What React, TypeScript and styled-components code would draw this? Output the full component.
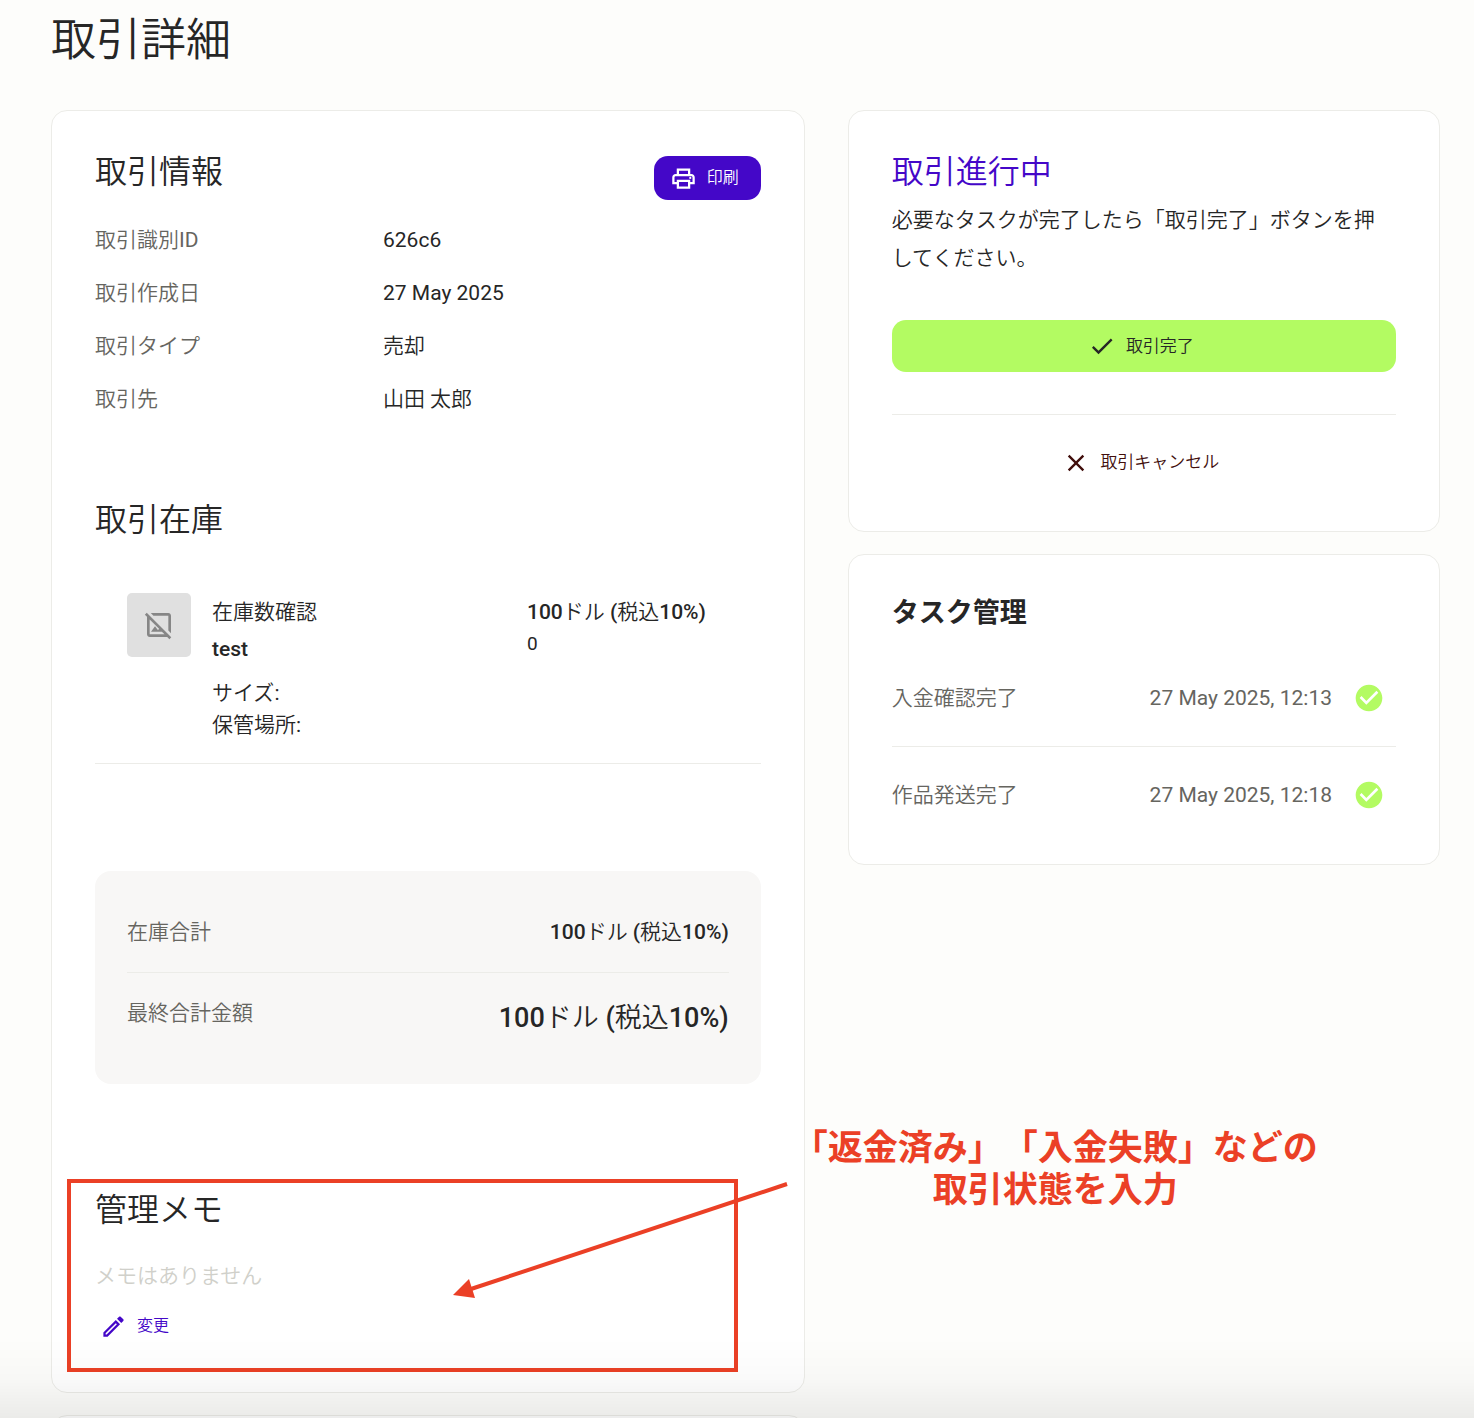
import React from "react";
import styled, { createGlobalStyle } from "styled-components";
import {
  MdCheck,
  MdCheckCircle,
  MdClose,
  MdOutlineEdit,
  MdOutlineHideImage,
  MdOutlinePrint,
} from "react-icons/md";

const c = {
  ink: "#262626",
  muted: "#66655f",
  faint: "#d0d0ca",
  line: "#ecece8",
  primary: "#4407c8",
  lime: "#b3fb62",
  danger: "#410e0b",
  mark: "#eb4026",
};

const GlobalStyle = createGlobalStyle`
  *, *::before, *::after { box-sizing: border-box; }
  body {
    margin: 0;
    background: #fdfdfb;
    color: ${c.ink};
    font-family: Roboto, "Noto Sans CJK JP", sans-serif;
    font-size: 21px;
    font-weight: 350;
    line-height: 32px;
    text-spacing-trim: space-all;
  }
  h1, h2, h3, p, dl, dd, ul { margin: 0; padding: 0; }
  button { font-family: inherit; cursor: pointer; }
`;

const Page = styled.main`
  height: 100vh;
  overflow-y: auto;
  scrollbar-width: none;
  padding: 9px 34px 0 51px;
`;

const PageTitle = styled.h1`
  margin-bottom: 37px;
  font-size: 45px;
  font-weight: 350;
  line-height: 64px;
`;

const Columns = styled.div`
  display: grid;
  grid-template-columns: 28fr 22fr;
  column-gap: 43px;
  align-items: start;
`;

const Column = styled.div`
  display: grid;
  gap: 22px;
`;

const Card = styled.section`
  padding: 41px 43px 45px;
  border: 1px solid ${c.line};
  border-radius: 16px;
  background: #fff;
`;

const SectionTitle = styled.h2<{ $accent?: boolean }>`
  font-size: 32px;
  font-weight: 350;
  line-height: 40px;
  color: ${(p) => (p.$accent ? c.primary : c.ink)};
`;

const CardHead = styled.header`
  display: flex;
  justify-content: space-between;
  align-items: flex-start;
  margin-bottom: 24px;
`;

const Button = styled.button`
  display: flex;
  align-items: center;
  gap: 10px;
  border: 0;
  border-radius: 14px;
  font-size: 16px;
  font-weight: 350;
`;

const ButtonLabel = styled.span`
  padding-bottom: 4px;
`;

const PrintButton = styled(Button)`
  height: 44px;
  margin-top: 4px;
  padding: 0 22px 0 16px;
  background: ${c.primary};
  color: #fff;
`;

const Facts = styled.dl`
  display: grid;
  grid-template-columns: 288px 1fr;
  row-gap: 21px;
  margin-bottom: 85px;
`;

const Term = styled.dt`
  color: ${c.muted};
`;

const Latin = styled.span`
  font-weight: 400;
`;

const Stock = styled.div`
  display: grid;
  grid-template-columns: 64px 294px 1fr;
  column-gap: 21px;
  margin: 53px 0 107px;
  padding: 0 32px 22px;
  border-bottom: 1px solid ${c.line};
`;

const Thumb = styled.div`
  display: grid;
  place-items: center;
  height: 64px;
  border-radius: 5px;
  background: #e0e0e0;
  color: #868686;
`;

const StockCell = styled.div`
  padding-top: 3px;
`;

const Strong = styled.strong`
  font-weight: 500;
`;

const StockCode = styled.p`
  margin: 5px 0 12px;
  font-weight: 500;
`;

const Quantity = styled.p`
  font-size: 19px;
  font-weight: 400;
`;

const Summary = styled.dl`
  margin-bottom: 106px;
  padding: 32px;
  border-radius: 16px;
  background: #f8f7f6;
`;

const SummaryRow = styled.div<{ $total?: boolean }>`
  display: flex;
  justify-content: space-between;
  height: ${(p) => (p.$total ? 79 : 70)}px;
  padding-top: ${(p) => (p.$total ? 24 : 13)}px;
  border-bottom: ${(p) => (p.$total ? "0" : `1px solid ${c.line}`)};

  dd {
    font-size: ${(p) => (p.$total ? 27 : 21)}px;
    line-height: ${(p) => (p.$total ? 42 : 32)}px;
  }
`;

const Memo = styled.div`
  position: relative;
`;

const EmptyMemo = styled.p`
  margin: 30px 0 13px;
  color: ${c.faint};
`;

const EditButton = styled(Button)`
  height: 42px;
  padding: 0 5px;
  background: none;
  color: ${c.primary};
`;

const Frame = styled.div`
  position: absolute;
  inset: -11px 23px -25px -28px;
  border: 4px solid ${c.mark};
  pointer-events: none;
`;

const Arrow = styled.svg`
  position: absolute;
  top: -10px;
  right: -30px;
  width: 340px;
  height: 122px;
  pointer-events: none;
`;

const Note = styled.p`
  position: absolute;
  top: -62px;
  left: calc(100% + 32px);
  color: ${c.mark};
  font-size: 35px;
  font-weight: 700;
  line-height: 42px;
  text-align: center;
  white-space: nowrap;
`;

const Lead = styled.p`
  margin: 9px 0 43px;
  padding-right: 8px;
  line-height: 38px;
`;

const CompleteButton = styled(Button)`
  justify-content: center;
  width: 100%;
  height: 52px;
  padding: 0 6px 0 0;
  background: ${c.lime};
  color: ${c.ink};
  font-size: 17px;
`;

const Rule = styled.hr`
  height: 1px;
  margin: 42px 0 24px;
  border: 0;
  background: ${c.line};
`;

const CancelButton = styled(CompleteButton)`
  height: 47px;
  background: none;
  color: ${c.danger};
`;

const TaskTitle = styled.h2`
  margin-bottom: 20px;
  font-size: 27px;
  font-weight: 700;
  line-height: 34px;
`;

const TaskList = styled.ul`
  list-style: none;
`;

const TaskRow = styled.li`
  display: flex;
  align-items: center;
  padding: 32px 11px 32px 0;
  color: ${c.muted};

  & + & {
    border-top: 1px solid ${c.line};
  }

  &:last-child {
    padding-bottom: 8px;
  }

  time {
    margin-left: auto;
    font-weight: 400;
  }

  svg {
    margin-left: 21px;
    color: ${c.lime};
  }
`;

const BottomShade = styled.div`
  position: fixed;
  inset: auto 0 0;
  height: 80px;
  background: linear-gradient(to bottom, transparent, rgba(0, 0, 0, 0.02) 50%, rgba(0, 0, 0, 0.07));
  pointer-events: none;
`;

const facts = [
  { id: "code", term: <>取引識別<Latin>ID</Latin></>, value: <Latin>626c6</Latin> },
  { id: "date", term: "取引作成日", value: <Latin>27 May 2025</Latin> },
  { id: "type", term: "取引タイプ", value: "売却" },
  { id: "client", term: "取引先", value: "山田 太郎" },
];

const tasks = [
  { name: "入金確認完了", date: "27 May 2025, 12:13" },
  { name: "作品発送完了", date: "27 May 2025, 12:18" },
];

const Price = () => (
  <>
    <Strong>100</Strong>ドル <Strong>(</Strong>税込<Strong>10%)</Strong>
  </>
);

const MemoSection = () => (
  <Memo>
    <SectionTitle>管理メモ</SectionTitle>
    <EmptyMemo>メモはありません</EmptyMemo>
    <EditButton type="button">
      <MdOutlineEdit size={27} />
      <ButtonLabel>変更</ButtonLabel>
    </EditButton>
    <Frame />
    <Arrow viewBox="0 0 340 122" aria-hidden="true">
      <path d="M336 4 20 109" stroke={c.mark} strokeWidth="4" />
      <path d="M2 115 18 99 24 118Z" fill={c.mark} />
    </Arrow>
    <Note>
      「返金済み」「入金失敗」などの
      <br />
      取引状態を入力
    </Note>
  </Memo>
);

export default function App() {
  return (
    <>
      <GlobalStyle />
      <Page lang="ja">
        <PageTitle>取引詳細</PageTitle>
        <Columns>
          <Column>
            <Card>
              <CardHead>
                <SectionTitle>取引情報</SectionTitle>
                <PrintButton type="button">
                  <MdOutlinePrint size={27} />
                  <ButtonLabel>印刷</ButtonLabel>
                </PrintButton>
              </CardHead>
              <Facts>
                {facts.map(({ id, term, value }) => (
                  <React.Fragment key={id}>
                    <Term>{term}</Term>
                    <dd>{value}</dd>
                  </React.Fragment>
                ))}
              </Facts>
              <SectionTitle>取引在庫</SectionTitle>
              <Stock>
                <Thumb>
                  <MdOutlineHideImage size={32} />
                </Thumb>
                <StockCell>
                  <p>在庫数確認</p>
                  <StockCode>test</StockCode>
                  <p>サイズ<Latin>:</Latin></p>
                  <p>保管場所<Latin>:</Latin></p>
                </StockCell>
                <StockCell>
                  <p>
                    <Price />
                  </p>
                  <Quantity>0</Quantity>
                </StockCell>
              </Stock>
              <Summary>
                <SummaryRow>
                  <Term>在庫合計</Term>
                  <dd>
                    <Price />
                  </dd>
                </SummaryRow>
                <SummaryRow $total>
                  <Term>最終合計金額</Term>
                  <dd>
                    <Price />
                  </dd>
                </SummaryRow>
              </Summary>
              <MemoSection />
            </Card>
            <Card />
          </Column>
          <Column>
            <Card>
              <SectionTitle $accent>取引進行中</SectionTitle>
              <Lead>必要なタスクが完了したら「取引完了」ボタンを押してください。</Lead>
              <CompleteButton type="button">
                <MdCheck size={28} />
                <ButtonLabel>取引完了</ButtonLabel>
              </CompleteButton>
              <Rule />
              <CancelButton type="button">
                <MdClose size={28} />
                <ButtonLabel>取引キャンセル</ButtonLabel>
              </CancelButton>
            </Card>
            <Card>
              <TaskTitle>タスク管理</TaskTitle>
              <TaskList>
                {tasks.map(({ name, date }) => (
                  <TaskRow key={name}>
                    {name}
                    <time>{date}</time>
                    <MdCheckCircle size={32} role="img" aria-label="完了" />
                  </TaskRow>
                ))}
              </TaskList>
            </Card>
          </Column>
        </Columns>
      </Page>
      <BottomShade />
    </>
  );
}
